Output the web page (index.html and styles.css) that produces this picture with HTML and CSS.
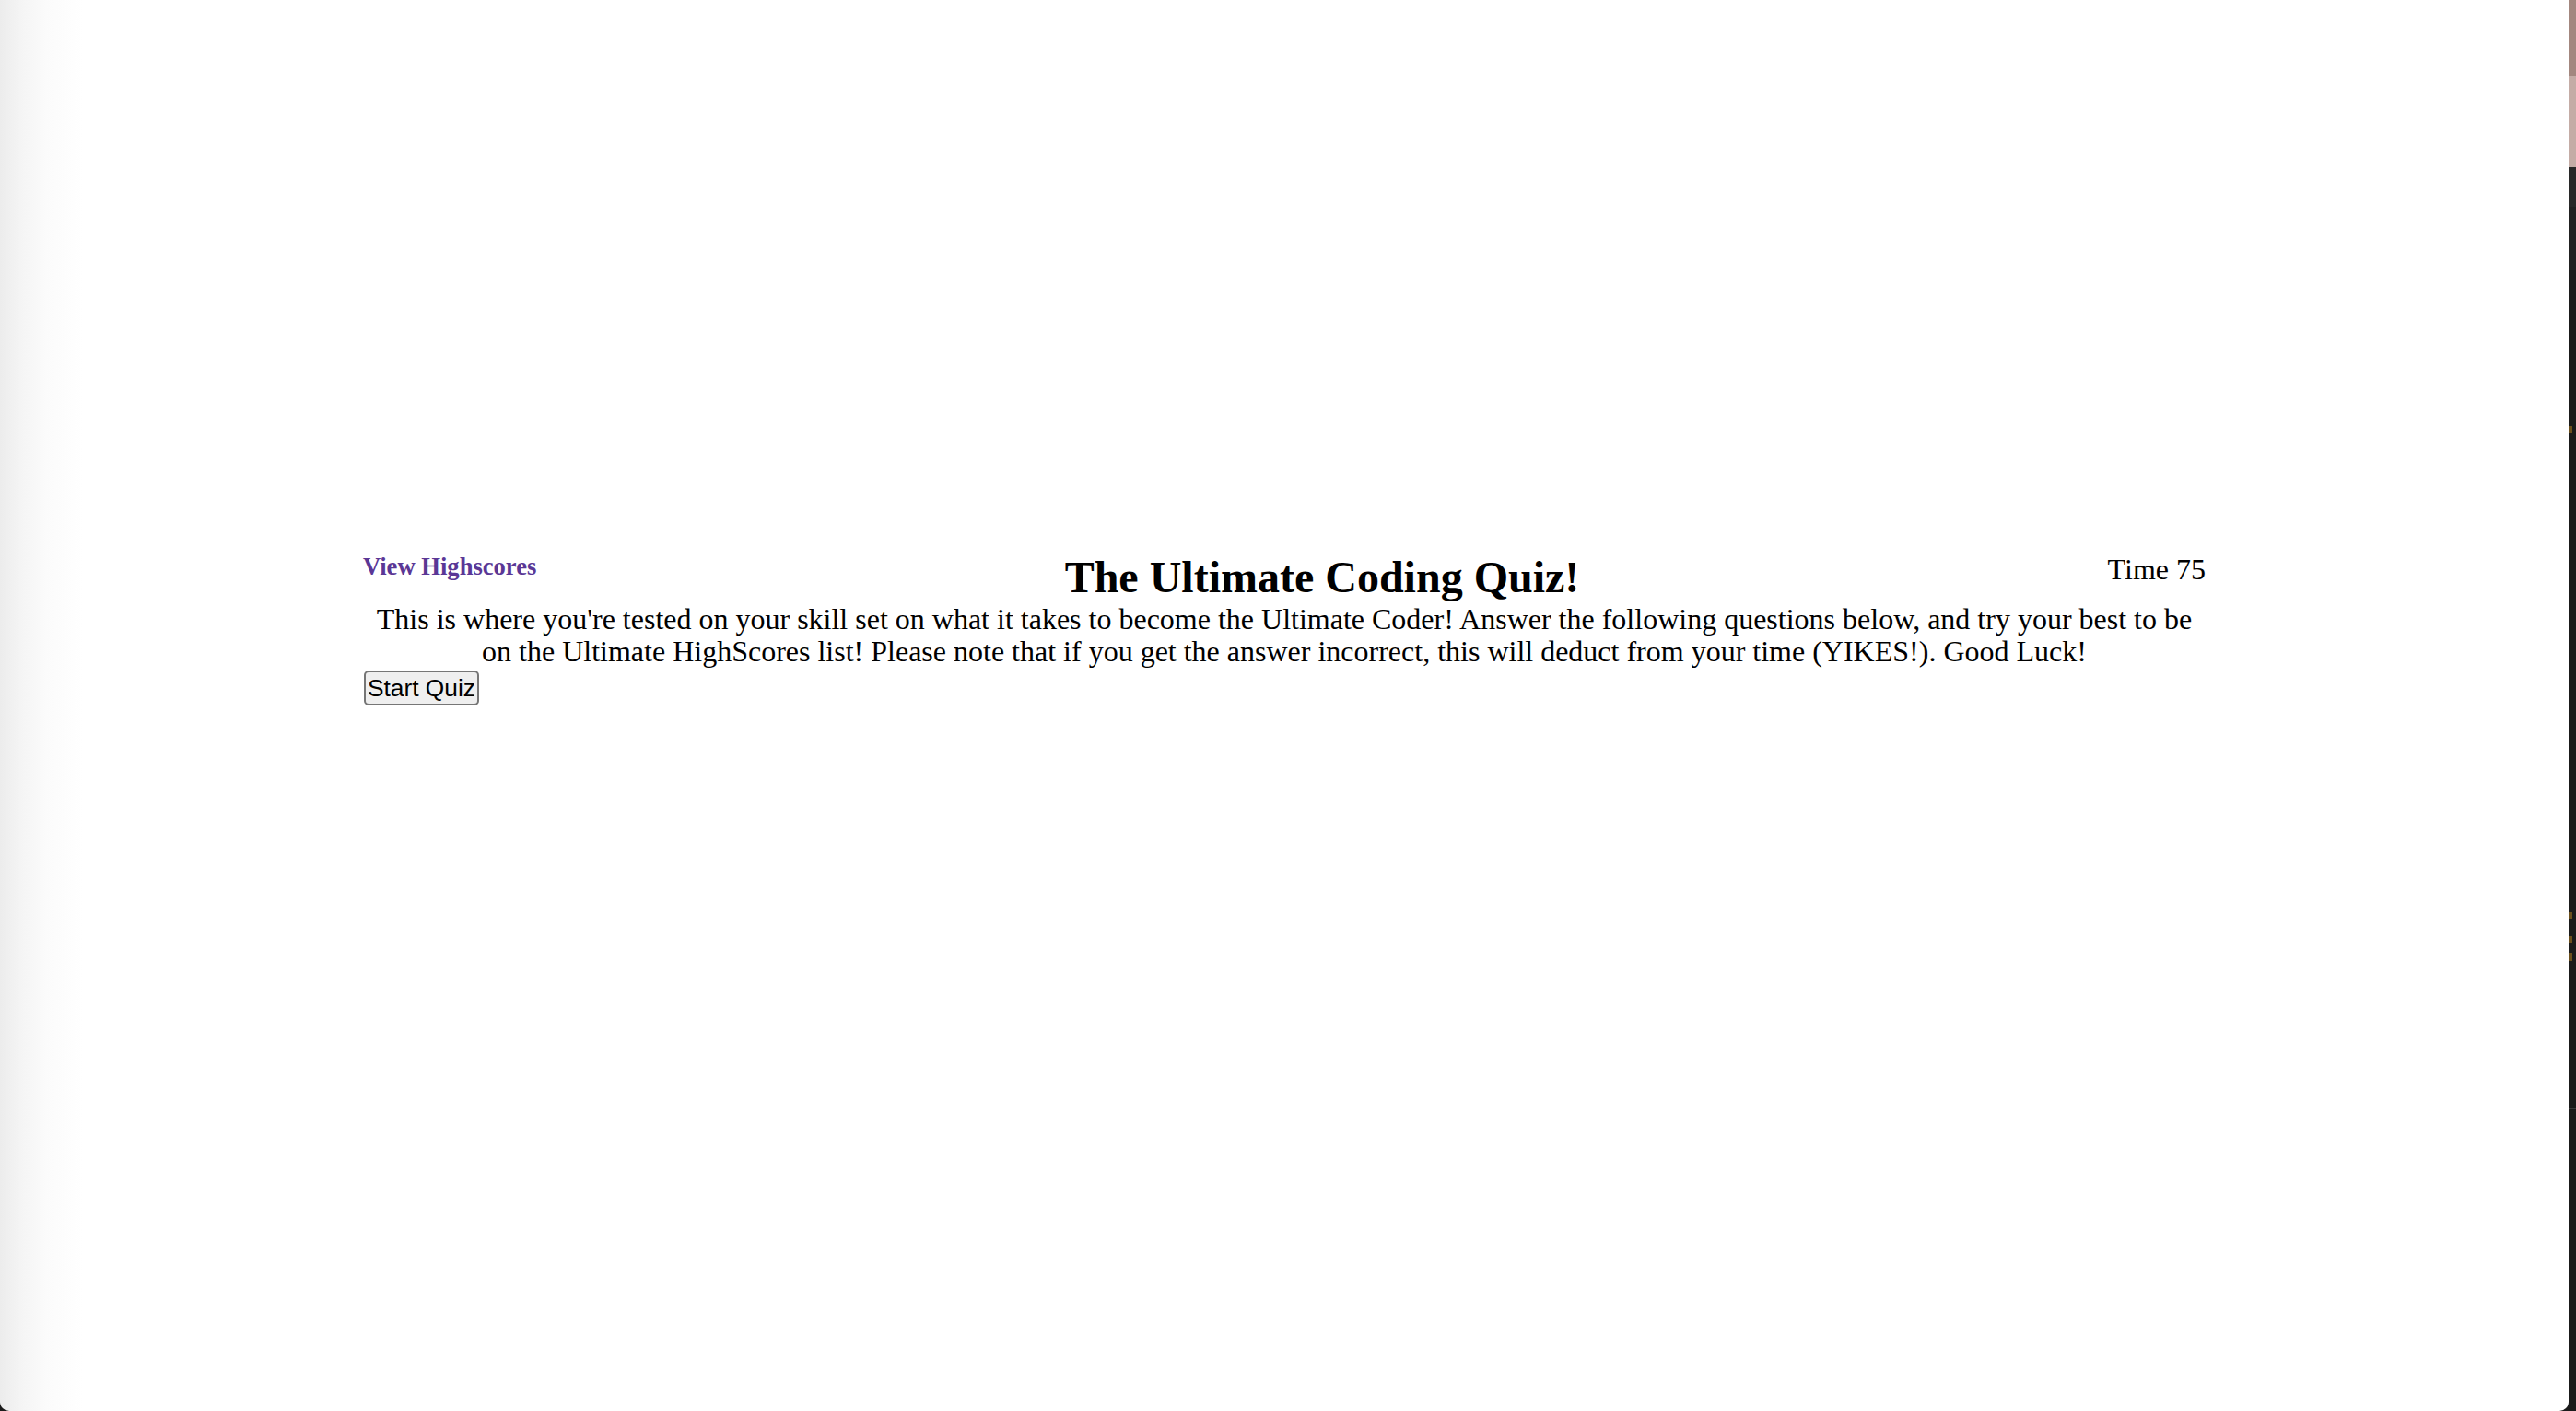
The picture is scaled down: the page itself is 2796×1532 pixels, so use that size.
FILE: index.html
```html
<!DOCTYPE html>
<html lang="en">
<head>
<meta charset="utf-8">
<title>The Ultimate Coding Quiz!</title>
<link rel="stylesheet" href="styles.css">
</head>
<body>
<div class="window">
  <main class="quiz">
    <header class="top">
      <a class="highscores" href="#">View Highscores</a>
      <h2 class="title">The Ultimate Coding Quiz!</h2>
      <div class="timer">Time 75</div>
    </header>
    <p class="intro">This is where you're tested on your skill set on what it takes to become the Ultimate Coder! Answer the following questions below, and try your best to be on the Ultimate HighScores list! Please note that if you get the answer incorrect, this will deduct from your time (YIKES!). Good Luck!</p>
    <button class="start">Start Quiz</button>
  </main>
</div>
<aside class="side">
  <div class="seg seg-a"></div>
  <div class="seg seg-b"></div>
  <div class="seg seg-c"></div>
  <div class="seg seg-d"></div>
  <div class="seg seg-e"></div>
  <div class="seg seg-f"></div>
  <div class="seg seg-dot"></div>
  <div class="seg seg-g"></div>
  <div class="seg seg-dot"></div>
  <div class="seg seg-h"></div>
  <div class="seg seg-dot"></div>
  <div class="seg seg-i"></div>
  <div class="seg seg-dot"></div>
  <div class="seg seg-j"></div>
  <div class="seg seg-line"></div>
</aside>
</body>
</html>
```

FILE: styles.css
```css
html, body {
  margin: 0;
  height: 1532px;
}

body {
  display: flex;
  background: #1b1b1b;
  font-family: "Liberation Serif", "Times New Roman", serif;
  font-size: 32px;
  color: #000;
  overflow: hidden;
}

.window {
  flex: 1;
  height: 1532px;
  box-sizing: border-box;
  padding-top: 600px;
  border-radius: 0 0 10px 10px;
  background: linear-gradient(to right, #ececec 0px, #f5f5f5 25px, #fbfbfb 50px, #ffffff 90px);
}

.quiz {
  width: 2000px;
  margin: 0 auto;
}

.top {
  display: flex;
  justify-content: space-between;
  align-items: flex-start;
}

.highscores {
  font-size: 26.6px;
  font-weight: bold;
  color: #5a3796;
  text-decoration: none;
  line-height: normal;
}

.title {
  margin: 0;
  font-size: 48px;
  font-weight: bold;
  line-height: 54px;
}

.timer {
  font-size: 32px;
  line-height: normal;
}

.intro {
  margin: 0;
  text-align: center;
  line-height: 35px;
  padding-top: 1px;
}

.start {
  display: block;
  margin-top: 3px;
  margin-left: 1px;
  font-family: "Liberation Sans", Arial, sans-serif;
  font-size: 26.3px;
  line-height: 30px;
  padding: 1.5px 2px 2px;
  color: #000;
  background: #efefef;
  border: 2px solid #767676;
  border-radius: 5px;
}

.side {
  width: 8px;
  height: 1532px;
  display: flex;
  flex-direction: column;
  background: #1a1a1a;
}

.seg { width: 8px; }
.seg-a { height: 83px; background: #a3877f; }
.seg-b { height: 98px; background: #c4aca6; }
.seg-c { height: 44px; background: #282828; }
.seg-d { height: 68px; background: #212121; }
.seg-e { height: 44px; background: #1c1c1c; }
.seg-f { height: 125px; background: #1a1a1a; }
.seg-dot { height: 8px; width: 4px; background: #6b4f1d; }
.seg-g { height: 520px; }
.seg-h { height: 18px; }
.seg-i { height: 11px; }
.seg-j { height: 160px; }
.seg-line { height: 1px; background: #3a3a3a; }
```
